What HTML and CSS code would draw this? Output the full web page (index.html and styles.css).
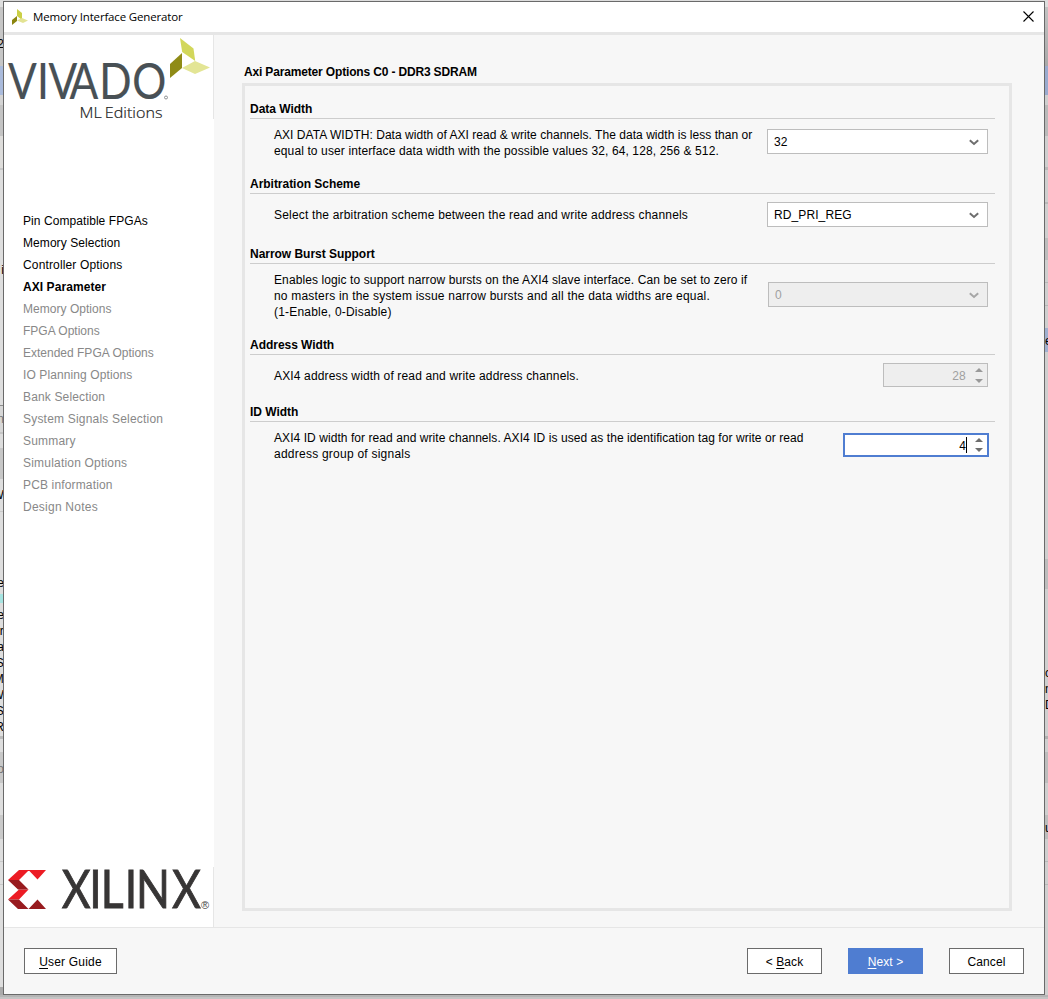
FILE: index.html
```html
<!DOCTYPE html>
<html lang="en">
<head>
<meta charset="utf-8">
<title>Memory Interface Generator</title>
<link rel="stylesheet" href="styles.css">
</head>
<body>
<div class="edge edge-left">
  <span style="top:37px">2</span><span style="top:263px">i</span><span style="top:412px" class="dim">n</span><span style="top:488px">W</span>
  <span style="top:576px">e</span><span style="top:608px">e</span><span style="top:624px">er</span><span style="top:640px">a</span><span style="top:656px">S</span><span style="top:672px">M</span><span style="top:688px">W</span><span style="top:704px">S</span><span style="top:720px">R</span><span style="top:762px" class="dim">o</span>
</div>
<main class="dialog">
  <header class="titlebar">
    <svg class="app-icon" width="16" height="16" viewBox="0 0 16 16"><path fill="#cbd046" d="M5 0l5 4v7L5 7z"/><path fill="#8b850f" d="M0 11l5-4v5l-5 4z"/><path fill="#e3e393" d="M5 11.500l5-2.500 6 2.500-5 2.500z"/></svg>
    <span class="title">Memory Interface Generator</span>
    <svg class="close" width="11" height="11" viewBox="0 0 11 11"><path d="M.5.500l10 10M10.500.500l-10 10" stroke="#000" stroke-width="1.100"/></svg>
  </header>
  <div class="content">
    <aside class="sidebar">
      <svg class="vivado" width="210" height="85" viewBox="4 35 210 85">
        <text class="vivado-name" transform="scale(.85 1)" x="9.400 43.500 57 81.800 116.800 155.600" y="99">VIVADO</text>
        <text class="edition" x="79.500" y="118" textLength="83" lengthAdjust="spacingAndGlyphs">ML Editions</text>
        <circle cx="166" cy="97.500" r="1.500" fill="none" stroke="#74797c" stroke-width=".8"/>
        <path fill="#d2d75b" d="M180 38l13.500 10.500 1.700 12.500-13-9z"/><path fill="#8f8b16" d="M170 64l12-11v15l-12 10z"/><path fill="#e3e595" d="M182 68l13-7 15 6.500-15 6.500z"/>
        <path d="M213.500 35v84" stroke="#e6e6e6"/>
      </svg>
      <nav class="steps">
        <span class="done t07">Pin Compatible FPGAs</span>
        <span class="done t07">Memory Selection</span>
        <span class="done t15">Controller Options</span>
        <span class="current t07">AXI Parameter</span>
        <span class="t03">Memory Options</span>
        <span class="t00">FPGA Options</span>
        <span class="t00">Extended FPGA Options</span>
        <span class="t10">IO Planning Options</span>
        <span class="t15">Bank Selection</span>
        <span>System Signals Selection</span>
        <span>Summary</span>
        <span>Simulation Options</span>
        <span class="t15">PCB information</span>
        <span class="t26">Design Notes</span>
      </nav>
      <svg class="xilinx" width="210" height="60" viewBox="4 867 210 60">
        <path fill="#ec1c24" d="M19 870h10l-10 10H8zM28.500 870H46l-8.500 9.500zM19 889.500h9.500L19 899.500H8z"/>
        <path fill="#981b1f" d="M8 880h11l9.500 9.500H18zM8 899.500h11l9.500 9.500H18zM28.500 909H46l-8.500-9.500z"/>
        <text class="xilinx-name" transform="scale(.84 1)" x="73.600 106.200 120 148.600 162 204.700" y="908.500">XILINX</text>
        <text class="registered" x="201" y="909">®</text>
        <path d="M213.500 867v60" stroke="#e6e6e6"/>
      </svg>
    </aside>
    <section class="page">
      <h1>Axi Parameter Options C0 - DDR3 SDRAM</h1>
      <div class="panel">
        <section class="group g1">
          <h2>Data Width</h2>
          <div class="row">
            <p><span class="t04">AXI DATA WIDTH: Data width of AXI read &amp; write channels. The data width is less than or</span><br><span class="t13">equal to user interface data width with the possible values 32, 64, 128, 256 &amp; 512.</span></p>
            <div class="combo"><span>32</span><svg width="10" height="7" viewBox="0 0 10 7"><path d="M.8 1.300L5 5 9.200 1.300"/></svg></div>
          </div>
        </section>
        <section class="group g2">
          <h2>Arbitration Scheme</h2>
          <div class="row">
            <p><span class="t18">Select the arbitration scheme between the read and write address channels</span></p>
            <div class="combo"><span class="t10">RD_PRI_REG</span><svg width="10" height="7" viewBox="0 0 10 7"><path d="M.8 1.300L5 5 9.200 1.300"/></svg></div>
          </div>
        </section>
        <section class="group g3">
          <h2>Narrow Burst Support</h2>
          <div class="row">
            <p><span class="t10">Enables logic to support narrow bursts on the AXI4 slave interface. Can be set to zero if</span><br><span>no masters in the system issue narrow bursts and all the data widths are equal.</span><br><span>(1-Enable, 0-Disable)</span></p>
            <div class="combo disabled"><span>0</span><svg width="10" height="7" viewBox="0 0 10 7"><path d="M.8 1.300L5 5 9.200 1.300"/></svg></div>
          </div>
        </section>
        <section class="group g4">
          <h2>Address Width</h2>
          <div class="row">
            <p><span class="t15">AXI4 address width of read and write address channels.</span></p>
            <div class="spinner disabled"><span>28</span><svg width="8" height="15" viewBox="0 0 8 15"><path d="M0 4L4 0l4 4zM0 11h8l-4 4z"/></svg></div>
          </div>
        </section>
        <section class="group g5">
          <h2>ID Width</h2>
          <div class="row">
            <p><span class="t06">AXI4 ID width for read and write channels. AXI4 ID is used as the identification tag for write or read</span><br><span class="t26">address group of signals</span></p>
            <div class="spinner focused"><span>4</span><i class="caret"></i><svg width="8" height="15" viewBox="0 0 8 15"><path d="M0 4L4 0l4 4zM0 10h8l-4 4z"/></svg></div>
          </div>
        </section>
      </div>
    </section>
  </div>
  <footer class="buttons">
    <button class="guide"><u>U</u>ser Guide</button>
    <button>&lt; <u>B</u>ack</button>
    <button class="primary"><u>N</u>ext &gt;</button>
    <button>Cancel</button>
  </footer>
</main>
<div class="edge edge-right">
  <span style="top:334px">e</span><span style="top:666px">c</span><span style="top:682px">n</span><span style="top:698px">D</span><span style="top:821px">u</span>
</div>
</body>
</html>
```
FILE: styles.css
```css
* { box-sizing: border-box; }
body {
  margin: 0; width: 1048px; height: 999px; overflow: hidden;
  display: grid; grid-template-columns: 3px 1042px 3px;
  background: linear-gradient(#dcdcdc 0 1px, #ccc 1px 995px, #b5b5b5 995px 997px, #c4c4c4 997px);
  font: 12px/16px "Liberation Sans", Arial, sans-serif; color: #000; letter-spacing: .2px;
}
h1, h2, p { margin: 0; }

/* Strips of the window behind the dialog */
.edge { position: relative; overflow: hidden; height: 995px; }
.edge span { position: absolute; line-height: 14px; }
.edge-left span { right: -1px; }
.edge-right span { left: 0; }
.edge .dim { color: #777; }
.edge-left { background: linear-gradient(#dedede 0 7px, #c6c6c6 7px 66px, #aabbdc 66px 95px, #d4d4d4 95px 105px, #c4c4c4 105px 136px, #dedddb 136px 168px, #c8c8c8 168px 170px, #dedede 170px 405px, #8c8c8c 405px 406px, #d7d7d7 406px 432px, #c5c5c5 432px 434px, #ddd 434px 448px, #c7c7c7 448px 479px, #dedede 479px 511px, #c9c9c9 511px 512px, #dedede 512px 594px, #a6e4e1 594px 603px, #dedede 603px 736px, #bbb 736px 739px, #dedede 739px 752px, #c8c8c8 752px 783px, #dedede 783px 815px, #cacaca 815px 839px, #dedede 839px 861px, #c8c8c8 861px 862px, #dedede 862px 884px, #c8c8c8 884px 885px, #dedede 885px 987px, #aaa 987px); }
.edge-right { background: linear-gradient(#dedede 0 7px, #c3c3c3 7px, #a9a9a9 66px, #9aabcf 66px 95px, #cfcfcf 95px 105px, #bababa 105px 136px, #cfcfcf 136px 167px, #b9b9b9 167px 170px, #cfcfcf 170px 202px, #b9b9b9 202px 204px, #cfcfcf 204px 238px, #bdbdbd 238px 260px, #cfcfcf 260px 282px, #b8b8b8 282px 283px, #cfcfcf 283px 305px, #b8b8b8 305px 306px, #cfcfcf 306px 328px, #a0b0d0 328px 352px, #cfcfcf 352px 559px, #bdbdbd 559px 589px, #cfcfcf 589px 736px, #b0b0b0 736px 739px, #cfcfcf 739px 752px, #bdbdbd 752px 783px, #cfcfcf 783px 815px, #bdbdbd 815px 839px, #cfcfcf 839px 861px, #b9b9b9 861px 862px, #cfcfcf 862px 884px, #b9b9b9 884px 885px, #cfcfcf 885px); }

/* Tracking steps */
.t00 { letter-spacing: 0; }
.t03 { letter-spacing: .03px; }
.t04 { letter-spacing: .04px; }
.t06 { letter-spacing: .064px; }
.t07 { letter-spacing: .07px; }
.t10 { letter-spacing: .1px; }
.t13 { letter-spacing: .12px; }
.t15 { letter-spacing: .15px; }
.t18 { letter-spacing: .18px; }
.t26 { letter-spacing: .24px; }

.dialog { margin-top: 1px; height: 994px; border: 1px solid #6a6a6a; background: #f7f7f7; display: flex; flex-direction: column; }
.titlebar { height: 33px; flex: none; border-bottom: 3px solid #e6e6e6; background: #fff; display: flex; align-items: center; padding: 0 10px 0 8px; }
.title { font-family: "Open Sans", sans-serif; font-size: 11.5px; letter-spacing: -.16px; margin-left: 5px; flex: 1; }
.close { margin-bottom: 2px; }
.content { height: 892px; flex: none; display: flex; }
.sidebar { width: 210px; background: #fff; display: flex; flex-direction: column; }
.sidebar svg { display: block; flex: none; letter-spacing: 0; }
.vivado-name { font: 50px Lato, sans-serif; fill: #485055; stroke: #485055; stroke-width: .2; }
.edition { font: 300 15px "Open Sans", sans-serif; fill: #222; stroke: #222; stroke-width: .2; word-spacing: -1px; }
.xilinx-name { font: 53px Lato, sans-serif; fill: #373535; stroke: #373535; stroke-width: .9; }
.registered { font: 11px "Liberation Sans", sans-serif; fill: #444; }
.steps { display: flex; flex-direction: column; padding: 90px 0 0 19px; line-height: 22px; color: #888; flex: 1; }
.steps .done { color: #000; }
.steps .current { color: #000; font-weight: bold; }
.page { padding: 29px 0 0 28px; }
h1 { font-size: 12px; line-height: 16px; padding-left: 2px; letter-spacing: -.16px; }
.panel { margin-top: 3px; width: 770px; height: 828px; border: 3px solid #e6e6e6; padding: 13px 14px 0 5px; }
h2 { font-size: 12px; line-height: 21px; height: 20px; border-bottom: 1px solid #cdcdcd; letter-spacing: -.03px; }
.g1 { height: 75px; } .g2 { height: 70px; } .g3 { height: 91px; } .g4 { height: 67px; }
.row { display: flex; justify-content: space-between; align-items: flex-start; padding: 8px 7px 0 24px; }
.row p { white-space: nowrap; }
.g2 p, .g4 p { margin-top: 5px; }
.combo { width: 221px; height: 25px; border: 1px solid #bdbdbd; background: #fff; display: flex; align-items: center; justify-content: space-between; padding: 0 8px 0 6px; margin-top: 2px; }
.combo svg { margin-top: 2px; }
.combo path { fill: none; stroke: #6e6e6e; stroke-width: 2; }
.g2 .combo { margin-top: 0; }
.combo.disabled { width: 220px; margin-top: 10px; }
.disabled { background: #eee; color: #a0a0a0; }
.combo.disabled path { stroke: #a6a6a6; }
.spinner { width: 105px; height: 24px; border: 1px solid #bdbdbd; display: flex; align-items: center; justify-content: flex-end; padding-right: 4px; }
.spinner span { padding-top: 2px; }
.spinner svg { margin-left: 9px; }
.spinner path { fill: #6e6e6e; }
.spinner.disabled path { fill: #999; }
.g5 .spinner { width: 146px; border: 2px solid #4f7dd1; background: #fff; margin: 3px -1px 0 0; }
.g5 .spinner svg { margin-left: 8px; }
.caret { width: 1px; height: 16px; background: #000; }
.buttons { flex: 1; border-top: 1px solid #e6e6e6; display: flex; align-items: flex-start; padding: 20px 20px 0; gap: 26px; }
button { width: 75px; height: 26px; border: 1px solid #6b6b6b; background: #fff; font: inherit; letter-spacing: .1px; padding: 2px 0 0; color: #000; }
button u { text-underline-offset: 2px; }
.guide { width: 93px; margin-right: auto; letter-spacing: .2px; }
.primary { background: #4f7dd1; border-color: #4f7dd1; color: #fff; }
```
